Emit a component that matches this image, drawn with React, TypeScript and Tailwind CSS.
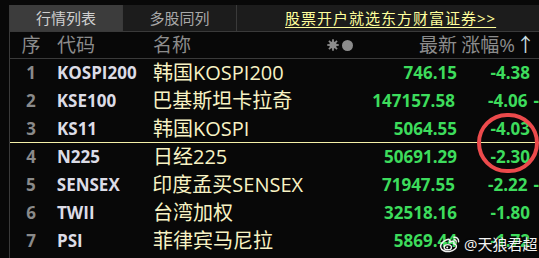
import React from "react";

const rows = [
  { n: "1", code: "KOSPI200", name: "韩国KOSPI200", price: "746.15", chg: "-4.38", extra: "" },
  { n: "2", code: "KSE100", name: "巴基斯坦卡拉奇", price: "147157.58", chg: "-4.06", extra: "-" },
  { n: "3", code: "KS11", name: "韩国KOSPI", price: "5064.55", chg: "-4.03", extra: "" },
  { n: "4", code: "N225", name: "日经225", price: "50691.29", chg: "-2.30", extra: "" },
  { n: "5", code: "SENSEX", name: "印度孟买SENSEX", price: "71947.55", chg: "-2.22", extra: "-" },
  { n: "6", code: "TWII", name: "台湾加权", price: "32518.16", chg: "-1.80", extra: "" },
  { n: "7", code: "PSI", name: "菲律宾马尼拉", price: "5869.44", chg: "-1.72", extra: "" },
];

const cjk = { fontFamily: '"Open Sans", "Noto Sans CJK SC", sans-serif' };
const num = { fontFamily: '"Open Sans", "Liberation Sans", sans-serif' };

function Gear() {
  return (
    <svg width="12" height="12" viewBox="0 0 12 12">
      <circle cx="6" cy="6" r="3.6" fill="#8c8c8c" />
      {[0, 45, 90, 135].map((a) => (
        <rect key={a} x="5.1" y="0.3" width="1.8" height="11.4" fill="#8c8c8c" transform={`rotate(${a} 6 6)`} />
      ))}
    </svg>
  );
}

function Weibo() {
  return (
    <svg width="22" height="18" viewBox="0 0 22 18">
      <path
        d="M8.5 4.5C4.5 5.5 1.2 9 1.6 12c.5 3.4 5 5 9 4.4 4.2-.6 7.2-3.2 6.8-5.6-.2-1.5-1.6-2-2.6-2.1.5-1.2.3-2.4-1.4-2.4-1 0-2 .5-2.4.7.2-1.2-.5-3.3-2.5-2.5z"
        fill="none"
        stroke="#f2f2f2"
        strokeWidth="1.5"
      />
      <ellipse cx="8.8" cy="12.2" rx="3.6" ry="2.6" fill="none" stroke="#f2f2f2" strokeWidth="1.4" />
      <circle cx="8.2" cy="12.5" r="1" fill="#f2f2f2" />
      <path d="M15 2.2c2.6-.4 4.9 1.6 4.6 4.6" fill="none" stroke="#f2f2f2" strokeWidth="1.5" strokeLinecap="round" />
      <path d="M15.2 4.8c1.2-.2 2.2.7 2 2" fill="none" stroke="#f2f2f2" strokeWidth="1.3" strokeLinecap="round" />
    </svg>
  );
}

export default function App() {
  return (
    <div className="relative w-[539px] h-[258px] overflow-hidden bg-[#080808]">
      <div className="h-[5px]" />
      <div className="ml-[9px] border-l border-[#3a3a3a] h-[253px]">
        {/* Tab bar */}
        <div className="flex h-[27px] bg-[#1c1c1c] border-b border-[#3a3a3a]" style={cjk}>
          <div className="w-[113px] flex items-center justify-center bg-[#3c3c3c] text-[15px] text-[#d0d0d0] border-r border-[#3a3a3a]">
            行情列表
          </div>
          <div className="w-[114px] flex items-center justify-center text-[15px] text-[#a8a8a8] border-r border-[#3a3a3a]">
            多股同列
          </div>
          <div className="flex-1 flex items-center pl-[48px]">
            <span className="text-[15px] text-[#ffff9c] underline underline-offset-[3px] tracking-[1px]">
              股票开户就选东方财富证券&gt;&gt;
            </span>
          </div>
        </div>
        {/* Header */}
        <div className="flex items-center h-[27px] border-b border-[#3a3a3a] text-[19px] text-[#8c8c8c]" style={cjk}>
          <div className="w-[42px] text-center">序</div>
          <div className="w-[101px] pl-[5px]">代码</div>
          <div className="w-[200px] flex items-center">
            <span>名称</span>
            <span className="ml-auto flex items-center gap-[3px]">
              <Gear />
              <span className="w-[11px] h-[11px] rounded-full bg-[#8c8c8c]" />
            </span>
          </div>
          <div className="w-[104px] text-right">最新</div>
          <div className="w-[78px] text-right whitespace-nowrap">
            涨幅<span className="tracking-[1px]">%</span>
            <span className="text-[#cfe0e6]">↑</span>
          </div>
        </div>
        {/* Rows */}
        {rows.map((r) => (
          <div
            key={r.n}
            className={`flex items-center h-[28px] leading-[28px] ${r.n === "3" ? "border-b border-[#f5f0a8]" : ""}`}
          >
            <div className="w-[42px] text-center text-[17px] font-bold text-[#8a8a8a]" style={num}>
              {r.n}
            </div>
            <div className="w-[101px] pl-[5px] text-[17px] font-bold text-[#dcdce6]" style={num}>
              {r.code}
            </div>
            <div className="w-[200px] text-[20px] text-[#f8f3c4] whitespace-nowrap" style={cjk}>
              {r.name}
            </div>
            <div className="w-[104px] text-right text-[17px] font-bold text-[#3ddc5c]" style={num}>
              {r.price}
            </div>
            <div className="w-[73px] text-right text-[17px] font-bold text-[#3ddc5c]" style={num}>
              {r.chg}
            </div>
            <div className="pl-[6px] text-[17px] font-bold text-[#3ddc5c]" style={num}>
              {r.extra}
            </div>
          </div>
        ))}
      </div>
      {/* Red circle annotation */}
      <div className="absolute left-[477px] top-[113px] w-[62px] h-[60px] rounded-full border-[4px] border-[#ec4a4c]" />
      {/* Weibo watermark */}
      <div className="absolute left-[439px] top-[233px] flex items-center gap-[3px]">
        <Weibo />
        <span
          className="text-[15px] text-[#f4f4f4]"
          style={{ ...cjk, textShadow: "0 0 2px rgba(0,0,0,0.8)" }}
        >
          @天狼君超
        </span>
      </div>
    </div>
  );
}
